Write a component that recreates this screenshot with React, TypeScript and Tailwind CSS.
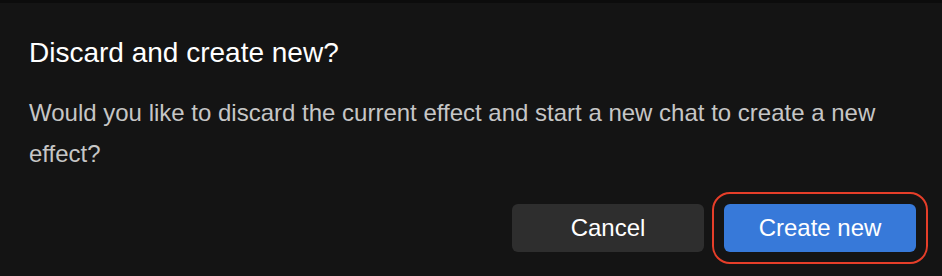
export default function App() {
  return (
    <div className="h-[276px] w-[942px] overflow-hidden bg-[#141414] font-['Liberation_Sans',Arial,sans-serif]">
      <div className="h-[3px] bg-[#0c0c0c]" />
      <div className="px-[29px] pt-[34px]">
        <h2 className="text-[28px] leading-[32px] text-white">Discard and create new?</h2>
        <p className="mt-[23px] text-[24px] leading-[41px] text-[#c6c6c6]">
          Would you like to discard the current effect and start a new chat to create a new effect?
        </p>
      </div>
      <div className="mt-[30px] flex justify-end gap-5 pr-[26px]">
        <button className="h-12 w-48 rounded-md bg-[#2e2e2e] text-[24px] text-white">Cancel</button>
        <button className="h-12 w-48 rounded-md bg-[#3779d9] text-[24px] text-white outline-[2.5px] outline-offset-[10px] outline-[#e63e29]">
          Create new
        </button>
      </div>
    </div>
  )
}
